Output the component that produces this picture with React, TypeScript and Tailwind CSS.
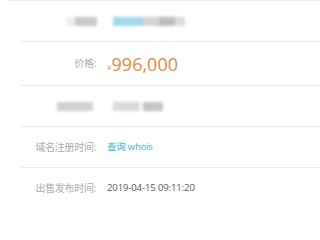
const rows = [
  { label: "", kind: "blur1" },
  { label: "价格:", kind: "price" },
  { label: "", kind: "blur2" },
  { label: "域名注册时间:", kind: "whois" },
  { label: "出售发布时间:", kind: "date" },
];

function Blur1() {
  return (
    <div className="flex items-center gap-[16px] blur-[1.5px]">
      <div className="flex h-[9px] w-[30px] -ml-[40px]">
        <div className="h-full w-[8px] bg-[#eeeeee]" />
        <div className="h-full w-[22px] bg-[#c8c8c8]" />
      </div>
      <div className="flex h-[9px]">
        <div className="h-full w-[30px] bg-[#9fd9ec]" />
        <div className="h-full w-[16px] bg-[#d4d4d4]" />
        <div className="h-full w-[16px] bg-[#bdbdbd]" />
        <div className="h-full w-[10px] bg-[#dcdcdc]" />
      </div>
    </div>
  );
}

function Blur2() {
  return (
    <div className="flex items-center gap-[20px] blur-[1.5px]">
      <div className="h-[9px] w-[36px] -ml-[50px] bg-[#d0d0d0]" />
      <div className="flex h-[9px] gap-[3px]">
        <div className="h-full w-[27px] bg-[#d8d8d8]" />
        <div className="h-full w-[20px] bg-[#c4c4c4]" />
      </div>
    </div>
  );
}

export default function App() {
  return (
    <div
      className="w-[320px] h-[200px] overflow-hidden bg-white"
      style={{ fontFamily: '"Open Sans", "Noto Sans CJK SC", sans-serif' }}
    >
      <div className="ml-[8px] h-[1px] bg-[#ececec]" />
      <div className="ml-[21px]">
        {rows.map((row, i) => (
          <div
            key={i}
            className={
              "flex items-center border-b border-[#ebebeb] " +
              (row.kind === "price" ? "h-[44px]" : "h-[41px]")
            }
          >
            <div className="w-[75px] shrink-0 text-right text-[10px] text-[#ababab] whitespace-nowrap tracking-[-0.3px]">
              {row.label}
            </div>
            <div className="ml-[11px] flex items-center">
              {row.kind === "blur1" && <Blur1 />}
              {row.kind === "blur2" && <Blur2 />}
              {row.kind === "price" && (
                <span className="text-[#e8873d] leading-none">
                  <span className="text-[8px] align-[1px]">¥</span>
                  <span className="text-[18px]">996,000</span>
                </span>
              )}
              {row.kind === "whois" && (
                <span className="text-[9.5px] text-[#35b2d6] tracking-[-0.2px]">查询 whois</span>
              )}
              {row.kind === "date" && (
                <span className="text-[9.5px] text-[#555555] tracking-[-0.1px]">2019-04-15 09:11:20</span>
              )}
            </div>
          </div>
        ))}
      </div>
    </div>
  );
}
